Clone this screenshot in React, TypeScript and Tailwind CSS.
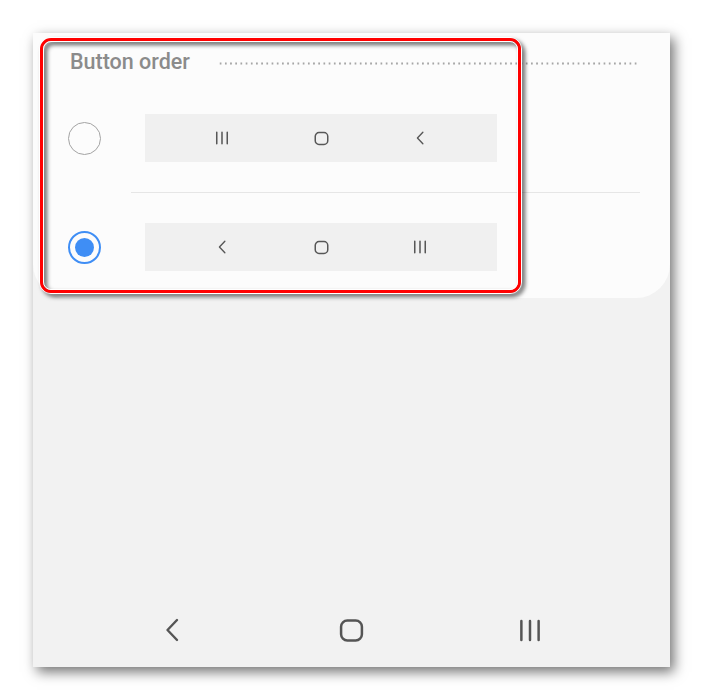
const BackIcon = ({ className }: { className?: string }) => (
  <svg className={className} viewBox="0 0 14 24" fill="none" stroke="currentColor" strokeWidth={2.4} strokeLinecap="round" strokeLinejoin="round">
    <path d="M12 2L2.5 12L12 22" />
  </svg>
);

const HomeIcon = ({ className }: { className?: string }) => (
  <svg className={className} viewBox="0 0 24 24" fill="none" stroke="currentColor" strokeWidth={2.4}>
    <rect x="2" y="2.5" width="20" height="19" rx="6" />
  </svg>
);

const RecentsIcon = ({ className }: { className?: string }) => (
  <svg className={className} viewBox="0 0 24 24" fill="none" stroke="currentColor" strokeWidth={2.6} strokeLinecap="round">
    <path d="M3 2v20M12 2v20M21 2v20" />
  </svg>
);

const Radio = ({ checked }: { checked?: boolean }) =>
  checked ? (
    <div className="w-[33px] h-[33px] rounded-full border-[2px] border-[#3f8ef5] flex items-center justify-center">
      <div className="w-[19px] h-[19px] rounded-full bg-[#3f8ef5]" />
    </div>
  ) : (
    <div className="w-[33px] h-[33px] rounded-full border-[1.5px] border-[#a3a3a3]" />
  );

const OrderBar = ({ reversed }: { reversed?: boolean }) => (
  <div className="w-[352px] h-[48px] bg-[#f0f0f0] flex items-center text-[#575757]">
    <div className="w-[77px] flex justify-center" />
    <div className="grid grid-cols-[0px_99px_99px_0px] items-center">
      <span />
      {reversed ? (
        <>
          <div className="flex justify-center w-0 overflow-visible"><BackIcon className="w-[8px] h-[14px] shrink-0" /></div>
          <div className="flex justify-center w-0 overflow-visible"><HomeIcon className="w-[15px] h-[15px] shrink-0" /></div>
          <div className="flex justify-center w-0 overflow-visible"><RecentsIcon className="w-[14px] h-[14px] shrink-0" /></div>
        </>
      ) : (
        <>
          <div className="flex justify-center w-0 overflow-visible"><RecentsIcon className="w-[14px] h-[14px] shrink-0" /></div>
          <div className="flex justify-center w-0 overflow-visible"><HomeIcon className="w-[15px] h-[15px] shrink-0" /></div>
          <div className="flex justify-center w-0 overflow-visible"><BackIcon className="w-[8px] h-[14px] shrink-0" /></div>
        </>
      )}
    </div>
  </div>
);

export default function App() {
  return (
    <div className="w-[703px] h-[700px] bg-white pl-[33px] pt-[33px] font-['Roboto',sans-serif]">
      <div className="relative w-[637px] h-[634px] bg-[#f2f2f2] flex flex-col shadow-[4px_5px_12px_rgba(0,0,0,0.55)]">
        {/* Settings card */}
        <div className="h-[265px] bg-[#fcfcfc] rounded-b-[34px] flex flex-col">
          <div className="flex items-center pl-[37px] pr-[32px] pt-[17px] h-[40px]">
            <span className="w-[148px] text-[21.5px] font-medium leading-none text-[#8b8b8b]">Button order</span>
            <div className="flex-1 h-[3px] mt-[3px] bg-[radial-gradient(circle,#a6a6a6_0.9px,transparent_1.3px)] bg-[length:5.2px_3px]" />
          </div>

          <div className="flex items-center mt-[41px]">
            <div className="w-[112px] pl-[35px]"><Radio /></div>
            <OrderBar />
          </div>

          <div className="ml-[98px] mr-[30px] mt-[30px] h-px bg-[#e6e6e6]" />

          <div className="flex items-center mt-[30px]">
            <div className="w-[112px] pl-[35px]"><Radio checked /></div>
            <OrderBar reversed />
          </div>
        </div>

        <div className="flex-1" />

        {/* Navigation bar */}
        <div className="h-[74px] flex items-center pl-[109px] gap-[119px] text-[#555555]">
          <div className="w-[60px] flex justify-center"><BackIcon className="w-[14px] h-[24px]" /></div>
          <div className="w-[60px] flex justify-center"><HomeIcon className="w-[25px] h-[25px]" /></div>
          <div className="w-[60px] flex justify-center"><RecentsIcon className="w-[24px] h-[23px]" /></div>
        </div>

        {/* Red highlight annotation */}
        <div className="absolute left-[6px] top-[4px] w-[483px] h-[257px] drop-shadow-[3px_3px_2px_rgba(0,0,0,0.6)]">
          <div className="w-full h-full rounded-[12px] border border-white">
            <div className="w-full h-full rounded-[11px] border-[3px] border-[#ff0000]">
              <div className="w-full h-full rounded-[8px] border border-white" />
            </div>
          </div>
        </div>
      </div>
    </div>
  );
}
